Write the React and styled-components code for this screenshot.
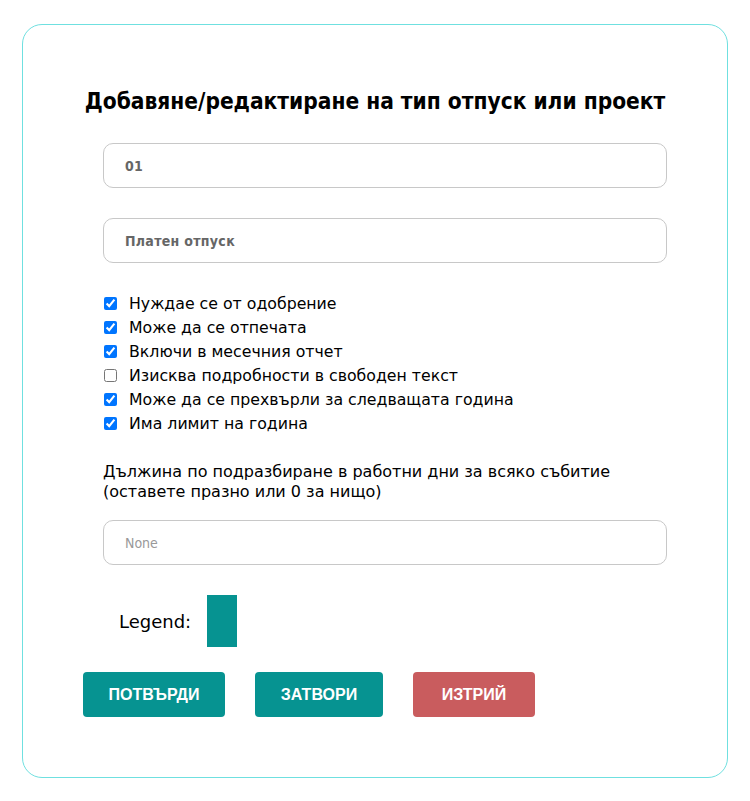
import React from "react";
import styled, { createGlobalStyle } from "styled-components";

const Global = createGlobalStyle`
  html, body { margin: 0; padding: 0; background: #fff; }
  body { font-family: "DejaVu Sans", Verdana, sans-serif; color: #000; }
`;

const Page = styled.div`
  padding: 24px 22px 23px 22px;
`;

const Card = styled.div`
  box-sizing: border-box;
  width: 706px;
  height: 754px;
  border: 1px solid #6fe0e0;
  border-radius: 20px;
  padding: 61px 60px 0 60px;
  display: flex;
  flex-direction: column;
`;

const Title = styled.h2`
  margin: 0 0 27px 0;
  text-align: center;
  font-family: "DejaVu Sans Condensed", "DejaVu Sans", sans-serif;
  font-weight: bold;
  font-size: 22.5px;
  line-height: 30px;
`;

const Form = styled.div`
  padding-left: 20px;
  display: flex;
  flex-direction: column;
`;

const Field = styled.div`
  box-sizing: border-box;
  width: 564px;
  height: 45px;
  border: 1px solid #c8c8c8;
  border-radius: 10px;
  padding: 0 21px;
  display: flex;
  align-items: center;
  font-family: "DejaVu Sans Condensed", "DejaVu Sans", sans-serif;
  font-size: 14px;
  letter-spacing: ${(p) => (p.$placeholder ? "0" : "0.3px")};
  font-weight: ${(p) => (p.$placeholder ? "normal" : "bold")};
  color: ${(p) => (p.$placeholder ? "#999" : "#666")};
  margin-bottom: ${(p) => p.$mb || 0}px;
`;

const Checks = styled.div`
  display: flex;
  flex-direction: column;
  margin-bottom: 27px;
`;

const CheckRow = styled.label`
  display: flex;
  align-items: center;
  height: 24px;
  font-size: 15.75px;
`;

const Box = styled.input`
  width: 13px;
  height: 13px;
  margin: 0 12px 0 1px;
`;

const Hint = styled.p`
  margin: 0 0 18px 0;
  font-size: 16px;
  line-height: 20px;
`;

const LegendRow = styled.div`
  display: flex;
  align-items: center;
  margin: 30px 0 25px 36px;
  font-size: 18px;
`;

const Swatch = styled.div`
  width: 30px;
  height: 52px;
  background: #069391;
  margin-left: 16px;
`;

const Buttons = styled.div`
  display: flex;
  gap: 30px;
`;

const Button = styled.button`
  box-sizing: border-box;
  width: ${(p) => p.$w}px;
  height: 45px;
  border: none;
  border-radius: 4px;
  background: ${(p) => (p.$danger ? "#c95c5e" : "#069391")};
  color: #fff;
  font-family: "Liberation Sans", Arial, sans-serif;
  font-weight: bold;
  font-size: 16px;
  padding: 0;
`;

const items = [
  ["Нуждае се от одобрение", true],
  ["Може да се отпечата", true],
  ["Включи в месечния отчет", true],
  ["Изисква подробности в свободен текст", false],
  ["Може да се прехвърли за следващата година", true],
  ["Има лимит на година", true],
];

export default function App() {
  return (
    <>
      <Global />
      <Page>
        <Card>
          <Title>Добавяне/редактиране на тип отпуск или проект</Title>
          <Form>
            <Field $mb={30}>01</Field>
            <Field $mb={28}>Платен отпуск</Field>
            <Checks>
              {items.map(([t, c]) => (
                <CheckRow key={t}>
                  <Box type="checkbox" defaultChecked={c} />
                  {t}
                </CheckRow>
              ))}
            </Checks>
            <Hint>
              Дължина по подразбиране в работни дни за всяко събитие
              <br />
              (оставете празно или 0 за нищо)
            </Hint>
            <Field $placeholder>None</Field>
          </Form>
          <LegendRow>
            Legend:
            <Swatch />
          </LegendRow>
          <Buttons>
            <Button $w={142}>ПОТВЪРДИ</Button>
            <Button $w={128}>ЗАТВОРИ</Button>
            <Button $w={122} $danger>ИЗТРИЙ</Button>
          </Buttons>
        </Card>
      </Page>
    </>
  );
}
